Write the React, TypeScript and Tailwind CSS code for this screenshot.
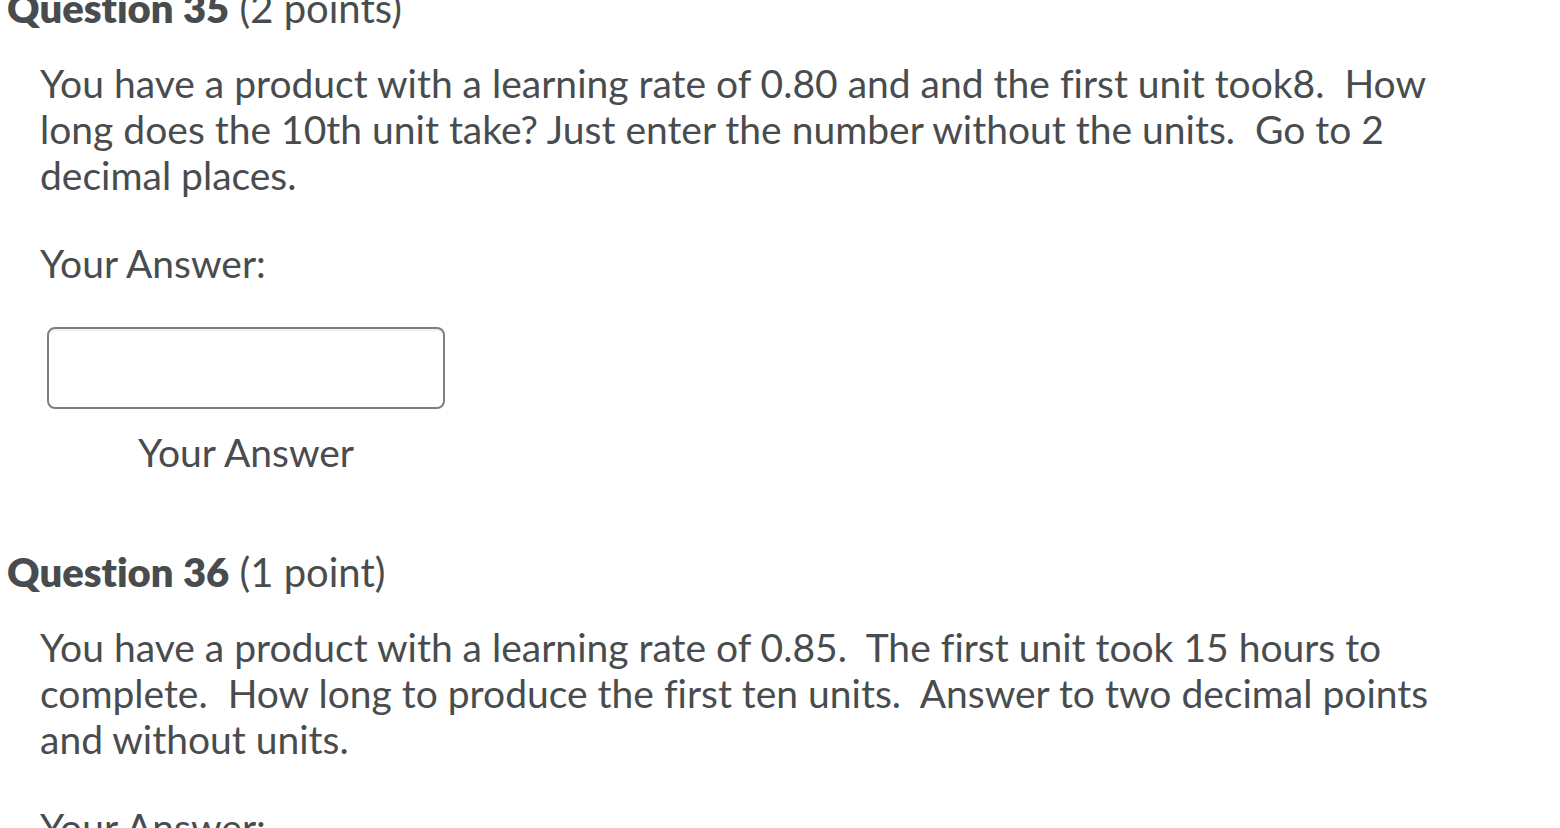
import React from 'react';

const font = "font-['Lato','Noto_Sans',sans-serif] [font-variant-ligatures:none]";

const Question: React.FC<{ num: number; points: string; text: string; first?: boolean }> = ({
  num, points, text, first,
}) => (
  <section className={first ? 'mt-[-15px]' : 'mt-[74px]'}>
    <h2 className="pl-[7px] text-[40px] leading-[46px]">
      <span className="font-extrabold">Question {num}</span> ({points})
    </h2>
    <p className="mt-[29px] ml-[40px] w-[1430px] text-[39px] leading-[46px]">{text}</p>
    <div className="mt-[42px] ml-[40px] text-[39px] leading-[46px]">Your Answer:</div>
    <div className="ml-[47px] mt-[41px] w-[398px]">
      <input
        type="text"
        aria-label="Your Answer"
        className="block w-full h-[82px] rounded-[8px] border-2 border-[#7c7f83] bg-white shadow-[inset_0_2px_0_rgba(0,0,0,0.06)] outline-none"
      />
      <div className="mt-[20px] text-center text-[39px] leading-[46px]">Your Answer</div>
    </div>
  </section>
);

export default function App() {
  return (
    <div className={`${font} h-[828px] w-[1560px] overflow-hidden bg-white text-[#494c4e]`}>
      <Question
        first
        num={35}
        points="2 points"
        text={'You have a product with a learning rate of 0.80 and and the first unit took8.\u00a0 How long does the 10th unit take? Just enter the number without the units.\u00a0 Go to 2 decimal places.'}
      />
      <Question
        num={36}
        points="1 point"
        text={'You have a product with a learning rate of 0.85.\u00a0 The first unit took 15 hours to complete.\u00a0 How long to produce the first ten units.\u00a0 Answer to two decimal points and without units.'}
      />
    </div>
  );
}
